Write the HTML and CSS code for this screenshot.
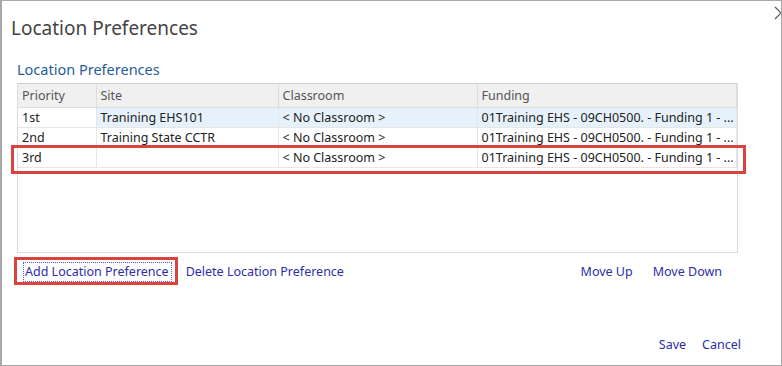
FILE: index.html
```html
<!DOCTYPE html>
<html lang="en">
  <head>
    <meta charset="UTF-8" />
    <meta name="viewport" content="width=device-width, initial-scale=1.0" />
    <title>Location Preferences</title>
    <link rel="stylesheet" href="styles.css">
  </head>
  <body>
    <div class="dialog">
      <svg class="luk" width="14" height="14" viewBox="0 0 14 14">
        <path d="M1 1 L13 13 M13 1 L1 13" stroke="#555" stroke-width="1.2" fill="none" />
      </svg>

      <h1 class="titel">Location Preferences</h1>

      <section class="indhold">
        <h2>Location Preferences</h2>

        <div class="gitter">
          <table>
            <colgroup>
              <col class="c1" />
              <col class="c2" />
              <col class="c3" />
              <col class="c4" />
            </colgroup>
            <thead>
              <tr>
                <th>Priority</th>
                <th>Site</th>
                <th>Classroom</th>
                <th>Funding</th>
              </tr>
            </thead>
            <tbody>
              <tr class="valgt">
                <td>1st</td>
                <td>Tranining EHS101</td>
                <td>&lt; No Classroom &gt;</td>
                <td>01Training EHS - 09CH0500. - Funding 1 - ...</td>
              </tr>
              <tr>
                <td>2nd</td>
                <td>Training State CCTR</td>
                <td>&lt; No Classroom &gt;</td>
                <td>01Training EHS - 09CH0500. - Funding 1 - ...</td>
              </tr>
              <tr>
                <td>3rd</td>
                <td></td>
                <td>&lt; No Classroom &gt;</td>
                <td>01Training EHS - 09CH0500. - Funding 1 - ...</td>
              </tr>
            </tbody>
          </table>
          <span class="markering"></span>
        </div>

        <nav class="handlinger">
          <span class="fremhaevet"><a href="#" class="fokus">Add Location Preference</a></span>
          <a href="#">Delete Location Preference</a>
          <span class="fyld"></span>
          <a href="#">Move Up</a>
          <a href="#">Move Down</a>
        </nav>
      </section>

      <footer class="bund">
        <a href="#">Save</a>
        <a href="#">Cancel</a>
      </footer>
    </div>
  </body>
</html>
```

FILE: styles.css
```css
body {
  margin: 0;
  font-family: "Noto Sans", "Open Sans", sans-serif;
  color: #222;
  background-color: #fff;
}

.dialog {
  position: relative;
  width: 782px;
  height: 366px;
  box-sizing: border-box;
  border: 1px solid #a8a8a8;
  border-left-width: 2px;
  overflow: hidden;
}

.luk {
  position: absolute;
  top: 5px;
  right: -7px;
}

.titel {
  margin: 0;
  padding: 13px 0 0 9px;
  font-size: 19px;
  font-weight: normal;
  color: #444;
  line-height: 28px;
}

.indhold {
  padding: 0 0 0 15px;
}

.indhold h2 {
  margin: 0 0 4px;
  padding-top: 17px;
  font-size: 14.5px;
  font-weight: normal;
  color: #1f5e99;
  line-height: 20px;
}

.gitter {
  position: relative;
  width: 721px;
  height: 170px;
  box-sizing: border-box;
  border: 1px solid #dcdcdc;
  border-top: none;
}

table {
  width: 100%;
  border-collapse: collapse;
  table-layout: fixed;
  font-size: 12.5px;
}

.c1 {
  width: 78px;
}

.c2 {
  width: 182px;
}

.c3 {
  width: 199px;
}

th {
  height: 23px;
  padding: 0 4px;
  text-align: left;
  font-weight: normal;
  color: #555;
  background-color: #f0f0f0;
  border: 1px solid #dcdcdc;
  border-top-color: #d0d0d0;
}

th:first-child,
td:first-child {
  border-left: none;
}

td {
  height: 19px;
  padding: 0 4px;
  white-space: nowrap;
  overflow: hidden;
  border: 1px solid #e6e6e6;
  border-top: none;
}

.valgt td {
  background-color: #e6f1fb;
}

.valgt td:first-child {
  background-color: #fff;
}

.markering {
  position: absolute;
  left: -7px;
  top: 62px;
  width: 729px;
  height: 23px;
  border: 3px solid #d9423f;
}

.handlinger {
  display: flex;
  align-items: center;
  box-sizing: border-box;
  width: 721px;
  margin-top: 4px;
  padding-right: 16px;
  font-size: 12.5px;
}

a {
  color: #2d2dab;
  text-decoration: none;
}

.handlinger a {
  margin-right: 20px;
}

.handlinger a:last-child {
  margin-right: 0;
}

.fremhaevet {
  display: inline-block;
  margin-left: -3px;
  margin-right: 8px;
  padding: 2px 3px 0 6px;
  border: 3px solid #d9423f;
}

.handlinger .fremhaevet a {
  margin-right: 0;
}

.fokus {
  display: inline-block;
  padding: 0 2px 1px 1px;
  border: 1px dotted #5a5ab8;
}

.fyld {
  flex: 1;
}

.bund {
  position: absolute;
  right: 40px;
  bottom: 12px;
  display: flex;
  gap: 16px;
  font-size: 12.5px;
}
```
